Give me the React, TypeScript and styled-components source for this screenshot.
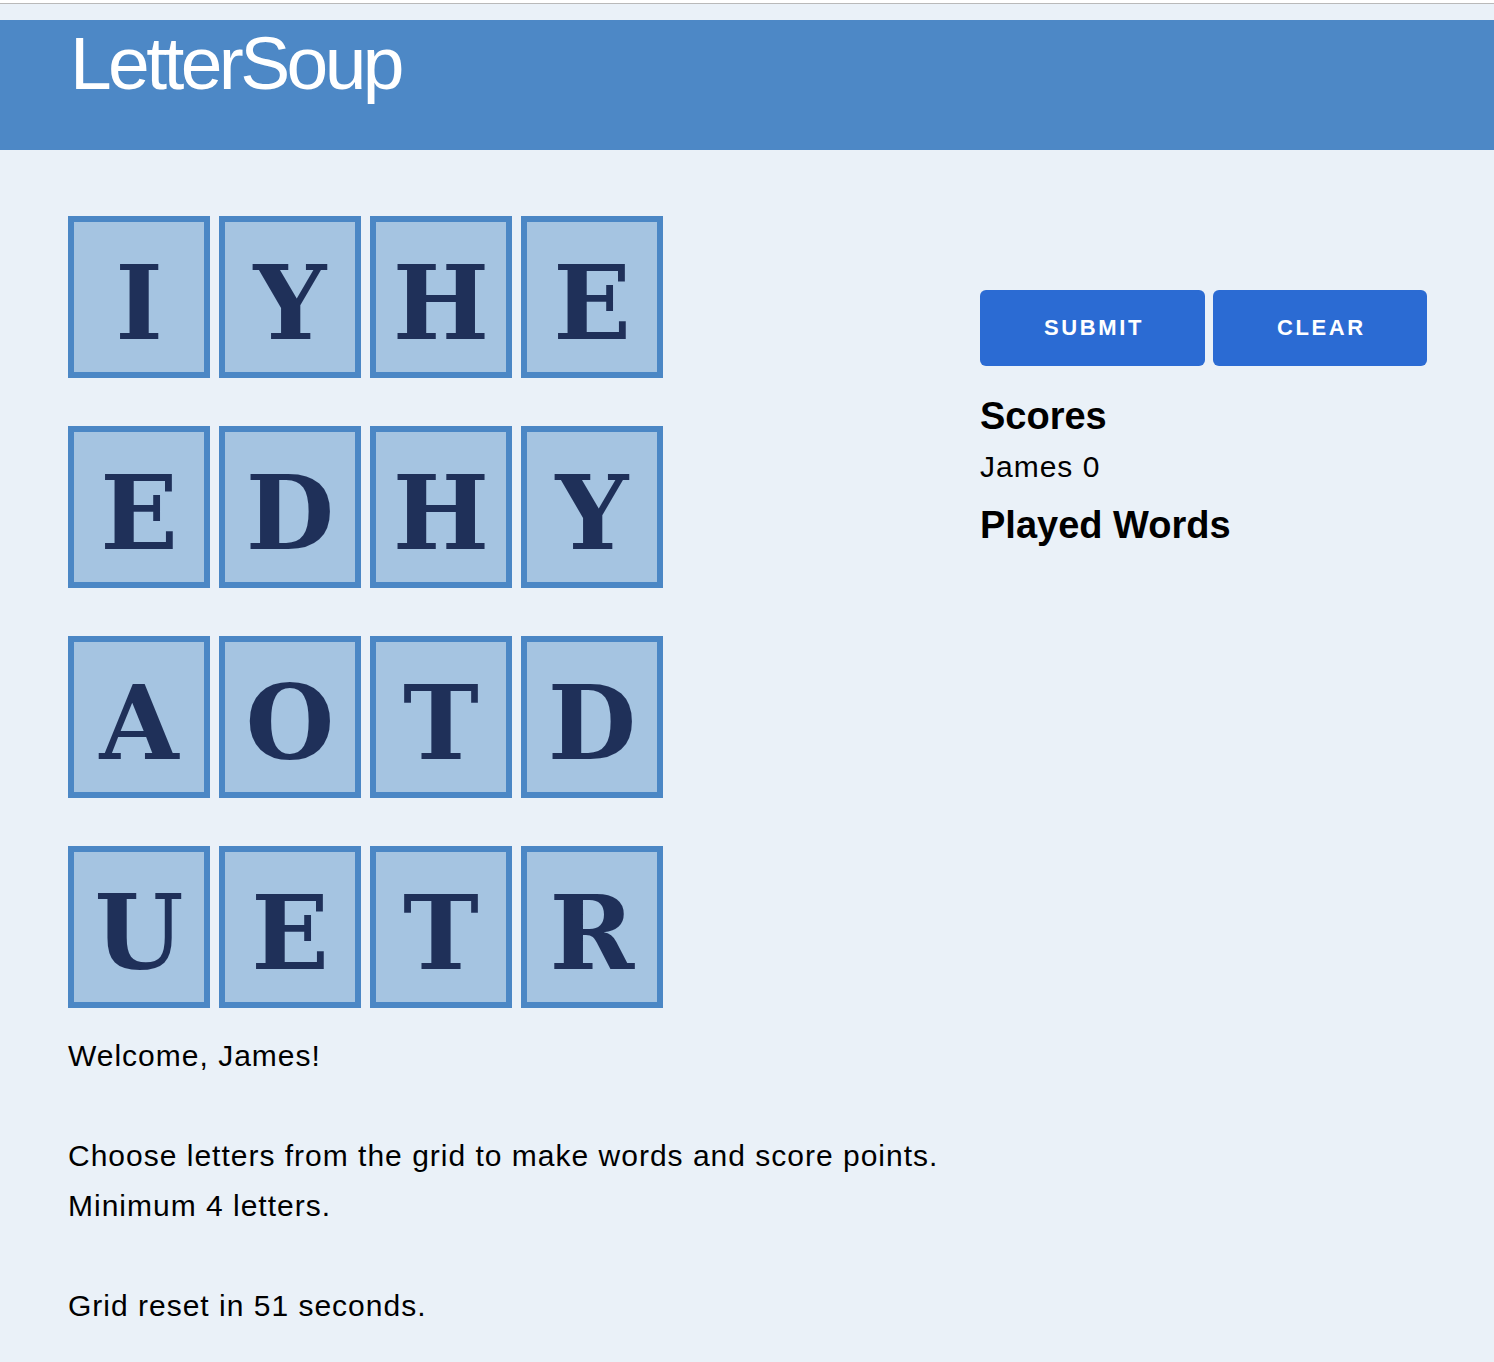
import React from "react";
import styled, { createGlobalStyle } from "styled-components";

const GlobalStyle = createGlobalStyle`
  body {
    margin: 0;
    background: #eaf1f8;
    font-family: "Liberation Sans", Arial, sans-serif;
    color: #000;
  }
`;

const grid = [
  ["I", "Y", "H", "E"],
  ["E", "D", "H", "Y"],
  ["A", "O", "T", "D"],
  ["U", "E", "T", "R"],
];

const TopRule = styled.div`
  height: 3px;
  background: #fff;
  border-bottom: 1px solid #b9b9b9;
`;

const Header = styled.header`
  margin-top: 16px;
  height: 130px;
  box-sizing: border-box;
  padding: 6px 0 0 70px;
  background: #4d88c6;
`;

const Logo = styled.h1`
  margin: 0;
  font-size: 75px;
  line-height: 75px;
  font-weight: 400;
  letter-spacing: -3.6px;
  color: #fff;
`;

const Main = styled.main`
  display: flex;
  padding: 66px 0 0 68px;
`;

const LeftColumn = styled.section`
  flex: 0 0 912px;
`;

const Board = styled.div`
  display: grid;
  grid-template-columns: repeat(4, 142px);
  grid-auto-rows: 162px;
  column-gap: 9px;
  row-gap: 48px;
`;

const Tile = styled.button`
  display: flex;
  align-items: center;
  justify-content: center;
  box-sizing: border-box;
  padding: 12px 0 0;
  border: 6px solid #4b87c5;
  background: #a5c4e1;
  color: #1f3059;
  font-family: "DejaVu Serif", serif;
  font-weight: 700;
  font-size: 102px;
  line-height: 1;
  cursor: pointer;
`;

const Info = styled.div`
  margin-top: 23px;
  font-size: 30px;
  letter-spacing: 1px;
  line-height: 50px;
`;

const Para = styled.p`
  margin: 0 0 50px;
`;

const RightColumn = styled.aside`
  padding-top: 74px;
`;

const ButtonRow = styled.div`
  display: flex;
  gap: 8px;
`;

const ActionButton = styled.button`
  height: 76px;
  padding: 0 61px 0 64px;
  border: none;
  border-radius: 6px;
  background: #2b6bd3;
  color: #fff;
  font-family: "Liberation Sans", Arial, sans-serif;
  font-weight: 700;
  font-size: 22px;
  letter-spacing: 2.6px;
  cursor: pointer;
`;

const Heading = styled.h2<{ $top: number }>`
  margin: ${(p) => p.$top}px 0 0;
  font-size: 38px;
  line-height: 44px;
  font-weight: 700;
`;

const ScoreLine = styled.div`
  margin-top: 4px;
  font-size: 30px;
  letter-spacing: 1px;
  line-height: 50px;
`;

export default function App() {
  return (
    <>
      <GlobalStyle />
      <TopRule />
      <Header>
        <Logo>LetterSoup</Logo>
      </Header>
      <Main>
        <LeftColumn>
          <Board>
            {grid.flat().map((letter, i) => (
              <Tile key={i}>{letter}</Tile>
            ))}
          </Board>
          <Info>
            <Para>Welcome, James!</Para>
            <Para>
              Choose letters from the grid to make words and score points.
              <br />
              Minimum 4 letters.
            </Para>
            <Para>Grid reset in 51 seconds.</Para>
          </Info>
        </LeftColumn>
        <RightColumn>
          <ButtonRow>
            <ActionButton>SUBMIT</ActionButton>
            <ActionButton>CLEAR</ActionButton>
          </ButtonRow>
          <Heading $top={28}>Scores</Heading>
          <ScoreLine>James 0</ScoreLine>
          <Heading $top={11}>Played Words</Heading>
        </RightColumn>
      </Main>
    </>
  );
}
